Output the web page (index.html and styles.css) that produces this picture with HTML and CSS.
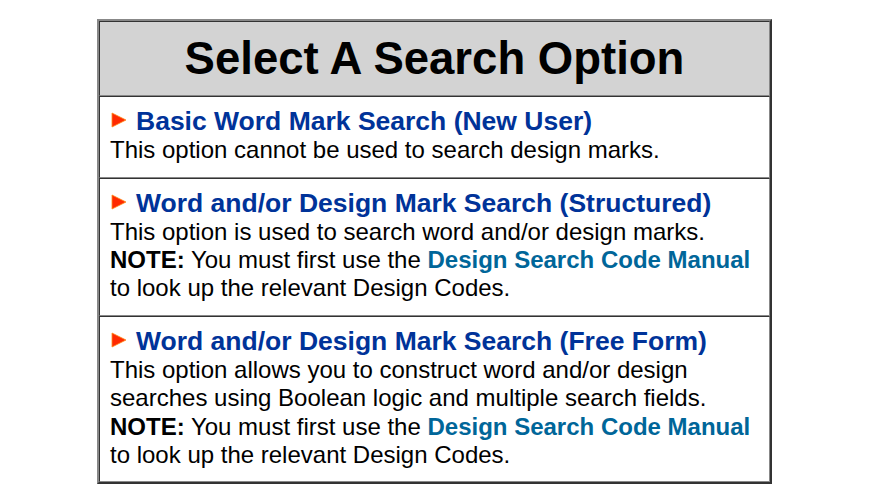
FILE: index.html
```html
<!DOCTYPE html>
<html lang="en">
<head>
  <meta charset="UTF-8">
  <title>Select A Search Option</title>
  <link rel="stylesheet" href="styles.css">
</head>
<body>

<table class="options">
  <tr>
    <th class="head">Select A Search Option</th>
  </tr>
  <tr>
    <td class="option">
      <a class="title" href="#"><svg class="arrow" viewBox="0 0 17 16"><polygon points="2,1 16,8 2,15" fill="#ff2a00" stroke="#ff8a1a" stroke-width="0.8"/></svg>Basic Word Mark Search (New User)</a><br>
      This option cannot be used to search design marks.
    </td>
  </tr>
  <tr>
    <td class="option">
      <a class="title" href="#"><svg class="arrow" viewBox="0 0 17 16"><polygon points="2,1 16,8 2,15" fill="#ff2a00" stroke="#ff8a1a" stroke-width="0.8"/></svg>Word and/or Design Mark Search (Structured)</a><br>
      This option is used to search word and/or design marks.<br>
      <b>NOTE:</b> You must first use the <a class="manual" href="#">Design Search Code Manual</a><br>
      to look up the relevant Design Codes.
    </td>
  </tr>
  <tr>
    <td class="option">
      <a class="title" href="#"><svg class="arrow" viewBox="0 0 17 16"><polygon points="2,1 16,8 2,15" fill="#ff2a00" stroke="#ff8a1a" stroke-width="0.8"/></svg>Word and/or Design Mark Search (Free Form)</a><br>
      This option allows you to construct word and/or design<br>
      searches using Boolean logic and multiple search fields.<br>
      <b>NOTE:</b> You must first use the <a class="manual" href="#">Design Search Code Manual</a><br>
      to look up the relevant Design Codes.
    </td>
  </tr>
</table>

</body>
</html>
```

FILE: styles.css
```css
body {
    margin: 0;
    padding-top: 19px;
    background: #ffffff;
    font-family: "Liberation Sans", Arial, sans-serif;
}
.options {
    width: 675px;
    margin: 0 0 0 97px;
    border-collapse: separate;
    border-spacing: 0;
    border: 2px solid;
    border-color: #888888 #333333 #333333 #888888;
}
.options th,
.options td {
    border: 1px solid;
    border-color: #333333 #888888 #888888 #333333;
}
.head {
    background: #d3d3d3;
    color: #000000;
    font-size: 45.5px;
    font-weight: bold;
    height: 73px;
    padding: 0;
    text-align: center;
}
.option {
    padding: 10px 10px 12px 10px;
    font-size: 24px;
    line-height: 28.3px;
    color: #000000;
    text-align: left;
}
.title {
    color: #003399;
    font-size: 26.5px;
    line-height: 28.3px;
    font-weight: bold;
    text-decoration: none;
}
.arrow {
    width: 17px;
    height: 16px;
    margin-right: 9px;
    vertical-align: 2px;
}
.manual {
    color: #006699;
    font-weight: bold;
    text-decoration: none;
}
```
